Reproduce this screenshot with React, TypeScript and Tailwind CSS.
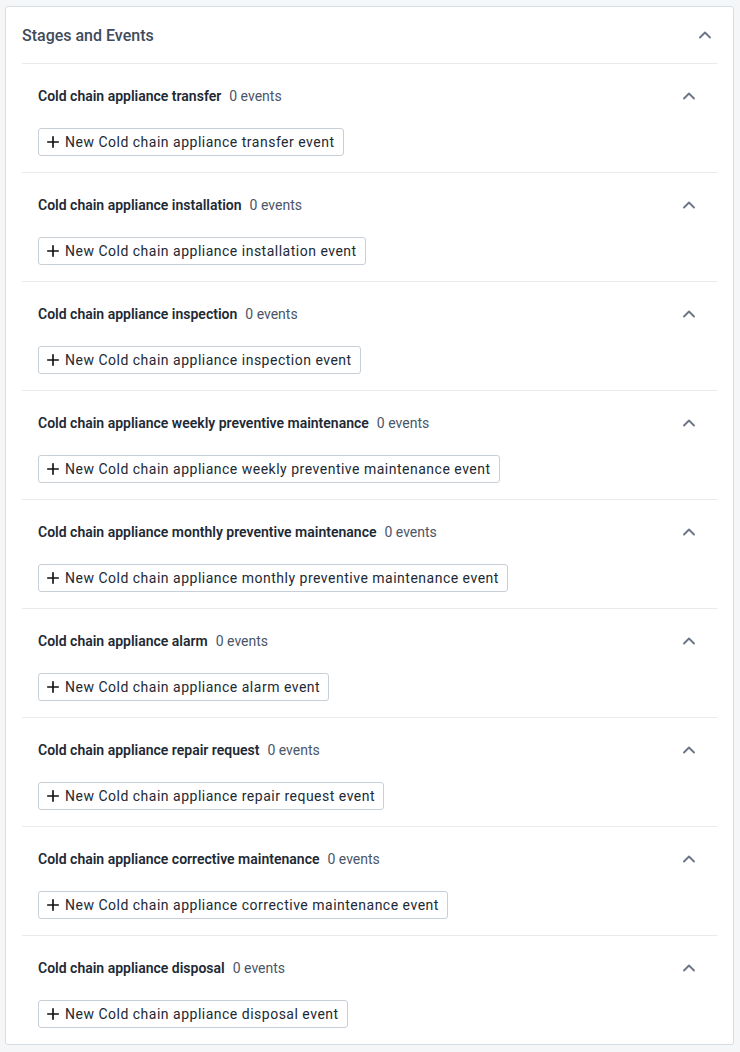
import { ChevronUp, Plus } from 'lucide-react';

const STAGES = [
  'Cold chain appliance transfer',
  'Cold chain appliance installation',
  'Cold chain appliance inspection',
  'Cold chain appliance weekly preventive maintenance',
  'Cold chain appliance monthly preventive maintenance',
  'Cold chain appliance alarm',
  'Cold chain appliance repair request',
  'Cold chain appliance corrective maintenance',
  'Cold chain appliance disposal',
];

function Stage({ name }: { name: string }) {
  return (
    <div className="border-t border-[#e8ebee] px-4 pt-5 pb-4">
      <div className="flex items-center justify-between h-6">
        <div className="flex items-center gap-2 text-sm">
          <span className="font-semibold text-[#212934]">{name}</span>
          <span className="text-[#4a5568]">0 events</span>
        </div>
        <button className="w-6 h-6 flex items-center justify-center text-[#6b7585]">
          <ChevronUp className="w-5 h-5" strokeWidth={2.25} />
        </button>
      </div>
      <button className="mt-5 h-7 flex items-center gap-[3px] pl-[5px] pr-2 border border-[#c9cfd6] rounded-[3px] bg-white text-sm text-[#212934] tracking-[0.5px]">
        <Plus className="w-[18px] h-[18px] text-[#111]" strokeWidth={2.2} />
        New {name} event
      </button>
    </div>
  );
}

export default function App() {
  return (
    <div className="min-h-[1052px] bg-[#f5f6f7] pt-[6px] pl-[5px] font-['Roboto',sans-serif]">
      <div className="w-[729px] bg-white border border-[#d5dde5] rounded-[3px] px-4">
        <div className="h-14 flex items-center justify-between">
          <h2 className="mt-[2px] text-base font-medium text-[#404b5a]">Stages and Events</h2>
          <button className="w-6 h-6 flex items-center justify-center text-[#6b7585]">
            <ChevronUp className="w-5 h-5" strokeWidth={2.25} />
          </button>
        </div>
        {STAGES.map(s => <Stage key={s} name={s} />)}
      </div>
    </div>
  );
}
